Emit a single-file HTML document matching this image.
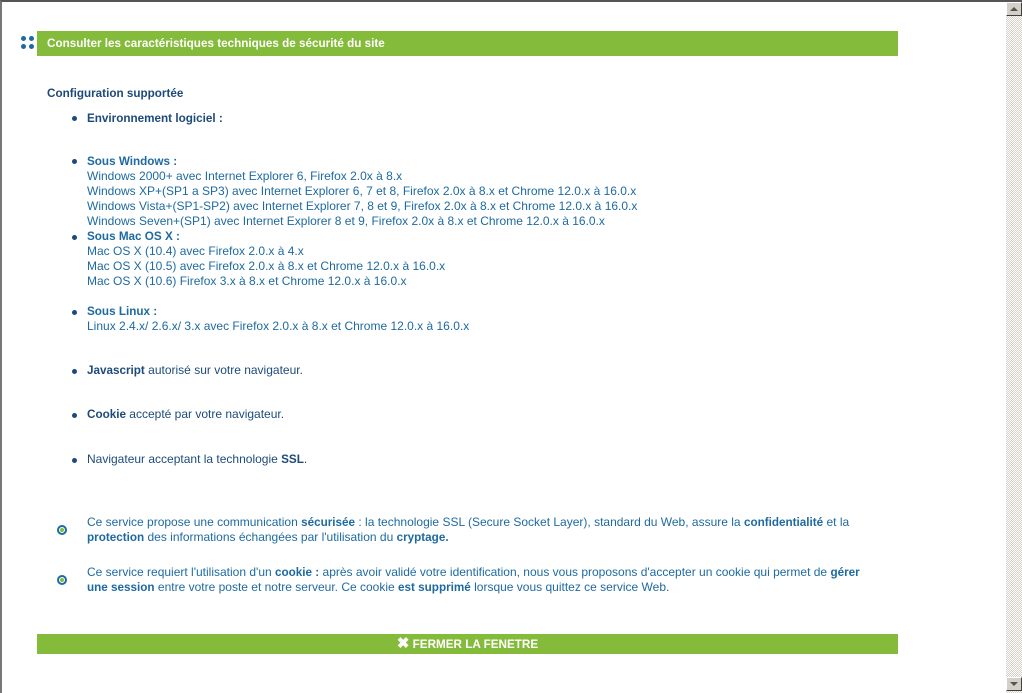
<!DOCTYPE html>
<html><head><meta charset="utf-8"><style>
body{margin:0;width:1022px;height:693px;overflow:hidden;background:#fff;font-family:"Liberation Sans",sans-serif;font-size:12px;position:relative}
b{font-size:11.7px}
.frame{position:absolute;left:0;top:0;width:1022px;height:693px;border-top:2px solid #555;border-left:2px solid #777;box-sizing:border-box}
.sb{position:absolute;left:1006px;top:2px;width:16px;height:691px;background:repeating-conic-gradient(#d4d0c8 0 25%,#fff 0 50%) 0 0/2px 2px}
.btn{position:absolute;left:1006px;width:16px;height:14px;background:#d4d0c8;border:1px solid;border-color:#fff #404040 #404040 #fff;box-sizing:border-box}
.a{position:absolute;white-space:nowrap}
.bar{position:absolute;left:37px;width:861px;background:#84bb3a;color:#fff;font-weight:bold;font-size:11.7px}
.n{color:#1d4a7a}.b{color:#1e6aa0}
.dot{position:absolute;width:5px;height:5px;border-radius:50%;background:#1d4a7a}
.rad{position:absolute;width:6px;height:6px;border:2px solid #1e6aa0;border-radius:50%;background:#fff}
.rad:after{content:"";position:absolute;left:1px;top:1px;width:4px;height:4px;border-radius:50%;background:#84bb3a}
</style></head><body>
<div class="frame"></div>
<div class="sb"></div>
<div class="btn" style="top:2px"><div style="position:absolute;left:3px;top:4px;border:4px solid transparent;border-bottom:4px solid #555;border-top:0"></div></div>
<div class="btn" style="top:677px"><div style="position:absolute;left:3px;top:4px;border:4px solid transparent;border-top:4px solid #555;border-bottom:0"></div></div>

<div style="position:absolute;left:21px;top:36px;width:5px;height:5px;border-radius:50%;background:#1e6aa0"></div>
<div style="position:absolute;left:29px;top:36px;width:5px;height:5px;border-radius:50%;background:#1e6aa0"></div>
<div style="position:absolute;left:21px;top:44px;width:5px;height:5px;border-radius:50%;background:#1e6aa0"></div>
<div style="position:absolute;left:29px;top:44px;width:5px;height:5px;border-radius:50%;background:#1e6aa0"></div>
<div class="bar" style="top:31px;height:25px;line-height:25px;padding-left:10px;box-sizing:border-box">Consulter les caractéristiques techniques de sécurité du site</div>

<div class="a n" style="left:47px;top:86px"><b>Configuration supportée</b></div>

<div class="dot" style="left:72px;top:116px"></div>
<div class="a n" style="left:87px;top:111px"><b>Environnement logiciel :</b></div>

<div class="dot" style="left:72px;top:159px"></div>
<div class="a b" style="left:87px;top:154px;line-height:15px"><b>Sous Windows :</b><br>Windows 2000+ avec Internet Explorer 6, Firefox 2.0x à 8.x<br>Windows XP+(SP1 a SP3) avec Internet Explorer 6, 7 et 8, Firefox 2.0x à 8.x et Chrome 12.0.x à 16.0.x<br>Windows Vista+(SP1-SP2) avec Internet Explorer 7, 8 et 9, Firefox 2.0x à 8.x et Chrome 12.0.x à 16.0.x<br>Windows Seven+(SP1) avec Internet Explorer 8 et 9, Firefox 2.0x à 8.x et Chrome 12.0.x à 16.0.x</div>

<div class="dot" style="left:72px;top:235px"></div>
<div class="a b" style="left:87px;top:229px;line-height:15px"><b>Sous Mac OS X :</b><br>Mac OS X (10.4) avec Firefox 2.0.x à 4.x<br>Mac OS X (10.5) avec Firefox 2.0.x à 8.x et Chrome 12.0.x à 16.0.x<br>Mac OS X (10.6) Firefox 3.x à 8.x et Chrome 12.0.x à 16.0.x</div>

<div class="dot" style="left:72px;top:310px"></div>
<div class="a b" style="left:87px;top:304px;line-height:15px"><b>Sous Linux :</b><br>Linux 2.4.x/ 2.6.x/ 3.x avec Firefox 2.0.x à 8.x et Chrome 12.0.x à 16.0.x</div>

<div class="dot" style="left:72px;top:369px"></div>
<div class="a n" style="left:87px;top:363px"><b>Javascript</b> autorisé sur votre navigateur.</div>
<div class="dot" style="left:72px;top:413px"></div>
<div class="a n" style="left:87px;top:407px"><b>Cookie</b> accepté par votre navigateur.</div>
<div class="dot" style="left:72px;top:458px"></div>
<div class="a n" style="left:87px;top:452px">Navigateur acceptant la technologie <b>SSL</b>.</div>

<div class="rad" style="left:57px;top:525px"></div>
<div class="a b" style="left:87px;top:515px;line-height:15px">Ce service propose une communication <b>sécurisée</b> : la technologie SSL (Secure Socket Layer), standard du Web, assure la <b>confidentialité</b> et la<br><b>protection</b> des informations échangées par l'utilisation du <b>cryptage.</b></div>
<div class="rad" style="left:57px;top:575px"></div>
<div class="a b" style="left:87px;top:565px;line-height:15px">Ce service requiert l'utilisation d'un <b>cookie :</b> après avoir validé votre identification, nous vous proposons d'accepter un cookie qui permet de <b>gérer</b><br><b>une session</b> entre votre poste et notre serveur. Ce cookie <b>est supprimé</b> lorsque vous quittez ce service Web.</div>

<div class="bar" style="top:634px;height:20px;line-height:20px;text-align:center"><span style="font-size:15px">✖</span> FERMER LA FENETRE</div>
</body></html>
